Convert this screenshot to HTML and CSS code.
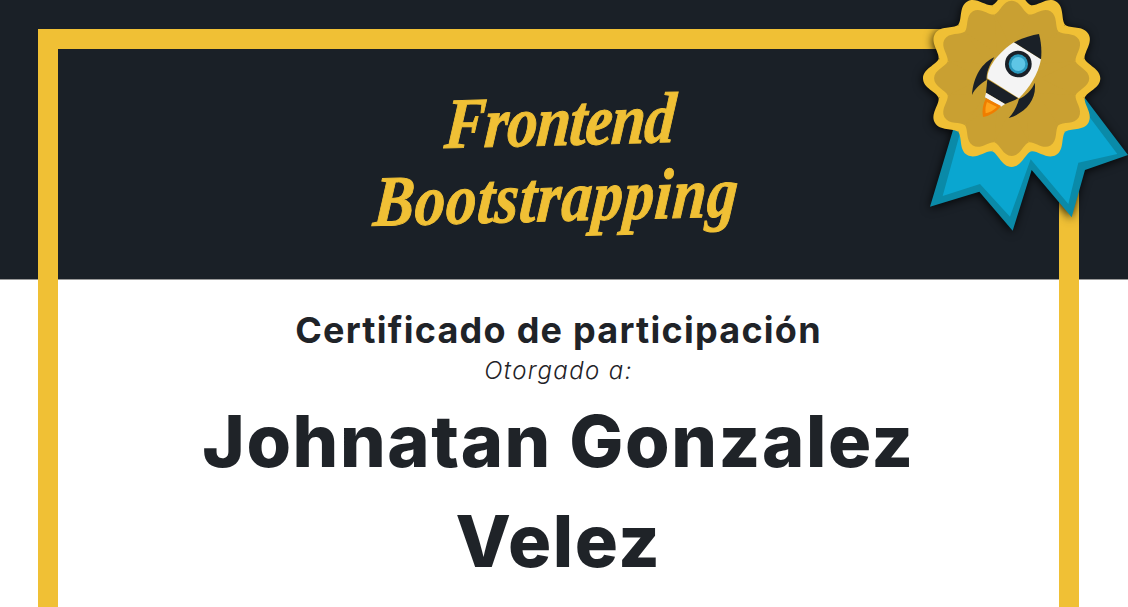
FILE: index.html
```html
<!DOCTYPE html>
<html lang="es">
<head>
<meta charset="utf-8">
<title>Certificado de participación</title>
<link rel="stylesheet" href="styles.css">
</head>
<body>
<main class="certificate">
  <header class="banner">
    <h1 class="brand"><span class="brand-line brand-short">Frontend</span><span class="brand-line brand-long">Bootstrapping</span></h1>
  </header>
  <section class="body">
    <h2 class="title">Certificado de participación</h2>
    <p class="awarded">Otorgado a:</p>
    <p class="name">Johnatan Gonzalez Velez</p>
  </section>
  <div class="frame"></div>
  <svg class="badge" viewBox="0 0 684 720" aria-hidden="true">
    <defs>
      <path id="petal" d="M-59,-219 C-40,-226 -30,-266 0,-266 C30,-266 40,-226 59,-219 L0,-100 Z"/>
      <g id="scallop">
        <circle r="224"/>
        <use href="#petal"/>
        <use href="#petal" transform="rotate(30)"/>
        <use href="#petal" transform="rotate(60)"/>
        <use href="#petal" transform="rotate(90)"/>
        <use href="#petal" transform="rotate(120)"/>
        <use href="#petal" transform="rotate(150)"/>
        <use href="#petal" transform="rotate(180)"/>
        <use href="#petal" transform="rotate(210)"/>
        <use href="#petal" transform="rotate(240)"/>
        <use href="#petal" transform="rotate(270)"/>
        <use href="#petal" transform="rotate(300)"/>
        <use href="#petal" transform="rotate(330)"/>
      </g>
    </defs>
    <g class="shadowed">
      <path class="ribbon-edge" d="M555,295 L684,465 L555,510 L515,652 L395,510 L338,692 L238,575 L90,620 L165,370 Z"/>
      <path class="ribbon-fill" d="M560,340 L652,462 L535,488 L505,612 L392,478 L330,650 L240,552 L128,588 L180,400 Z"/>
      <use href="#scallop" class="seal-outer" transform="translate(335,235)"/>
    </g>
    <use href="#scallop" class="seal-inner" transform="translate(335,235) scale(.875)"/>
    <path class="rocket-dark" d="M283,172 C248,187 220,228 216,285 C225,265 243,250 260,240 C258,220 268,195 283,172 Z"/>
    <path class="rocket-dark" d="M404,248 C397,268 378,288 357,297 C351,320 340,340 326,354 C375,340 412,300 404,248 Z"/>
    <path class="rocket-white" d="M342,127 L423,178 C415,222 387,265 357,295 L262,235 C262,200 298,155 342,127 Z"/>
    <path class="rocket-dark" d="M417,102 C395,105 365,115 342,127 L423,178 C426,150 423,125 417,102 Z"/>
    <path class="rocket-dark" d="M262,238 L354,295 L345,300 L315,312 L258,278 Z"/>
    <path class="rocket-white" d="M258,278 L315,312 L303,320 L255,292 Z"/>
    <path class="flame-outer" d="M258,295 L303,318 C290,335 268,348 249,351 C245,330 250,310 258,295 Z"/>
    <path class="flame-inner" d="M261,306 L291,321 C281,331 268,338 257,340 C255,329 257,316 261,306 Z"/>
    <circle class="rocket-dark" cx="355" cy="192" r="40"/>
    <circle class="window-ring" cx="355" cy="192" r="29"/>
    <circle class="window-glass" cx="355" cy="192" r="21"/>
  </svg>
</main>
</body>
</html>
```
FILE: styles.css
```css
* { box-sizing: border-box; }
html, body { margin: 0; height: 100%; overflow: hidden; background: #fff; }
.certificate { position: relative; height: 100%; overflow: hidden; font-family: Inter, "Open Sans", sans-serif; color: #1f2328; }
.banner { height: 280px; background: #1a2027; border-bottom: 1px solid #999; display: flex; justify-content: center; align-items: center; padding-top: 38px; padding-right: 8px; }
.brand { margin: 0; display: flex; flex-direction: column; align-items: center; font-family: "Liberation Serif", serif; font-style: italic; font-weight: 700; font-size: 72px; line-height: 76px; color: #f0c035; -webkit-text-stroke: 1px #f0c035; transform: skewX(-6deg) rotate(-1.5deg) scaleX(.84); }
.brand-line { display: block; }
.brand-short { letter-spacing: -1px; margin-right: 6px; }
.brand-long { letter-spacing: 1px; }
.body { display: flex; flex-direction: column; align-items: center; text-align: center; padding: 29px 160px 0; width: 1117px; }
.title { margin: 0; font-size: 36px; line-height: 42px; font-weight: 700; letter-spacing: 1.25px; }
.awarded { margin: 6px 0 0; font-size: 24px; line-height: 28px; font-weight: 300; font-style: italic; letter-spacing: 1.4px; }
.name { margin: 6px 0 0; width: 760px; font-size: 72px; line-height: 100px; font-weight: 800; letter-spacing: 1.6px; }
.frame { position: absolute; left: 38px; top: 29px; width: 1041px; height: 700px; border: 20px solid #f0c035; }
.badge { position: absolute; left: 900px; top: 0; width: 228px; height: 240px; overflow: visible; }
.shadowed { filter: drop-shadow(-2px 5px 14px rgba(0,0,0,.85)); }
.ribbon-edge { fill: #0a8aa8; }
.ribbon-fill { fill: #0aa6d0; }
.seal-outer { fill: #f0c035; }
.seal-inner { fill: #c9a032; }
.rocket-dark { fill: #1a2027; }
.rocket-white { fill: #f4f4f4; }
.flame-outer { fill: #f07d00; }
.flame-inner { fill: #ffa31a; }
.window-ring { fill: #2a98bd; }
.window-glass { fill: #5ec6e6; }
```
